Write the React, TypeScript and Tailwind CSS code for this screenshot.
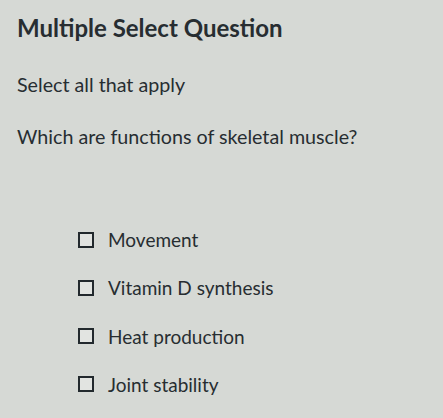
const options = ["Movement", "Vitamin D synthesis", "Heat production", "Joint stability"];

export default function App() {
  return (
    <div className="h-[418px] w-[443px] overflow-hidden bg-[#d6d9d5] pl-[17px] pt-[13px] text-[#272d31] font-['Lato',sans-serif]">
      <h1 className="text-[24px] font-bold leading-[30px]">Multiple Select Question</h1>
      <p className="mt-[29px] text-[19.7px] leading-[26px]">Select all that apply</p>
      <p className="mt-[26px] text-[19.7px] leading-[26px]">Which are functions of skeletal muscle?</p>
      <ul className="mt-[77px] ml-[61px] flex flex-col gap-[23.3px]">
        {options.map((o) => (
          <li key={o} className="flex items-center gap-[14px] h-[25px]">
            <span className="block h-[16px] w-[16px] border-[2.5px] border-[#22292d] bg-[#e2e4e1]" />
            <span className="text-[19px] leading-[25px]">{o}</span>
          </li>
        ))}
      </ul>
    </div>
  );
}
